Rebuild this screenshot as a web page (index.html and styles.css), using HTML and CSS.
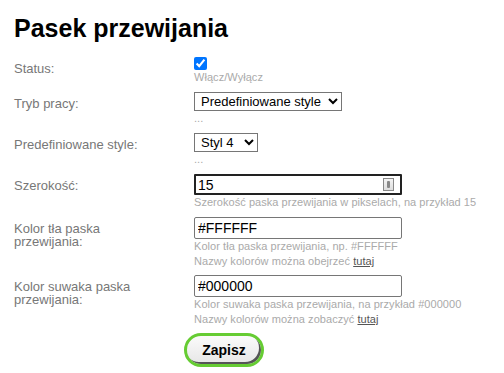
FILE: index.html
```html
<!DOCTYPE html>
<html lang="pl">
<head>
  <meta charset="UTF-8" />
  <title>Pasek przewijania</title>
  <link rel="stylesheet" href="styles.css">
</head>
<body>

<div class="settings">
  <h1>Pasek przewijania</h1>

  <form class="settings-form">
    <div class="row">
      <label class="row-label">Status:</label>
      <div class="row-field">
        <input type="checkbox" class="check" checked />
        <div class="hint">Włącz/Wyłącz</div>
      </div>
    </div>

    <div class="row">
      <label class="row-label">Tryb pracy:</label>
      <div class="row-field">
        <select class="select select-wide">
          <option>Predefiniowane style</option>
        </select>
        <div class="hint">...</div>
      </div>
    </div>

    <div class="row">
      <label class="row-label">Predefiniowane style:</label>
      <div class="row-field">
        <select class="select select-short">
          <option>Styl 4</option>
        </select>
        <div class="hint">...</div>
      </div>
    </div>

    <div class="row">
      <label class="row-label">Szerokość:</label>
      <div class="row-field">
        <div class="input-wrap">
          <input type="text" class="text-input text-input-focus" value="15" />
          <span class="key-icon"></span>
        </div>
        <div class="hint">Szerokość paska przewijania w pikselach, na przykład 15</div>
      </div>
    </div>

    <div class="row row-tight">
      <label class="row-label">Kolor tła paska przewijania:</label>
      <div class="row-field">
        <input type="text" class="text-input" value="#FFFFFF" />
        <div class="hint">Kolor tła paska przewijania, np. #FFFFFF</div>
        <div class="hint">Nazwy kolorów można obejrzeć <a href="#">tutaj</a></div>
      </div>
    </div>

    <div class="row row-tight">
      <label class="row-label">Kolor suwaka paska przewijania:</label>
      <div class="row-field">
        <input type="text" class="text-input" value="#000000" />
        <div class="hint">Kolor suwaka paska przewijania, na przykład #000000</div>
        <div class="hint">Nazwy kolorów można zobaczyć <a href="#">tutaj</a></div>
      </div>
    </div>

    <div class="actions">
      <button type="submit" class="save-button">Zapisz</button>
    </div>
  </form>
</div>

</body>
</html>
```

FILE: styles.css
```css
* {
  box-sizing: border-box;
}

body {
  margin: 0;
  background: #fff;
  font-family: 'Liberation Sans', Arial, sans-serif;
}

.settings {
  padding: 13px 14px 0;
}

h1 {
  margin: 0 0 14px;
  font-size: 25px;
  line-height: 30px;
  font-weight: bold;
  color: #000;
}

.row {
  display: grid;
  grid-template-columns: 180px 1fr;
  margin-bottom: 7px;
}

.row-tight {
  margin-bottom: 6px;
}

.row-label {
  font-size: 13px;
  line-height: 13px;
  color: #777;
  padding-top: 5px;
  padding-right: 30px;
}

.row-field {
  display: flex;
  flex-direction: column;
  align-items: flex-start;
}

.check {
  margin: 0;
  width: 13px;
  height: 13px;
}

.hint {
  font-size: 11px;
  line-height: 15px;
  color: #aaa;
  letter-spacing: 0.05px;
}

.hint a {
  color: #555;
}

.select {
  font-family: 'Liberation Sans', Arial, sans-serif;
  font-size: 13px;
  height: 19px;
  margin: 0;
  border: 1px solid #767676;
  border-radius: 0;
  background: #fff;
  color: #000;
  padding: 0 2px;
}

.select-wide {
  width: 148px;
}

.select-short {
  width: 64px;
}

.input-wrap {
  position: relative;
}

.text-input {
  display: block;
  width: 208px;
  height: 22px;
  margin: 0;
  padding: 1px 3px;
  font-family: 'Liberation Sans', Arial, sans-serif;
  font-size: 14px;
  color: #000;
  border: 1px solid #767676;
  border-radius: 2px;
}

.text-input-focus {
  height: 21px;
  border: 2px solid #222;
  border-radius: 1px;
  padding: 0 2px;
}

.key-icon {
  position: absolute;
  right: 8px;
  top: 4px;
  width: 11px;
  height: 13px;
  border: 1px solid #888;
  background: linear-gradient(#f4f4f4, #ddd);
}

.key-icon::after {
  content: '';
  position: absolute;
  left: 3px;
  top: 2px;
  width: 3px;
  height: 7px;
  border-radius: 1px;
  background: #888;
}

.actions {
  padding-left: 170px;
}

.save-button {
  width: 80px;
  height: 34px;
  font-family: 'Liberation Sans', Arial, sans-serif;
  font-size: 14px;
  font-weight: bold;
  color: #000;
  background: linear-gradient(#fbfbfb, #e6e6e6);
  border: 3px solid #66cc33;
  border-radius: 17px;
  box-shadow: inset -2px -2px 0 #555;
  cursor: pointer;
}
```
